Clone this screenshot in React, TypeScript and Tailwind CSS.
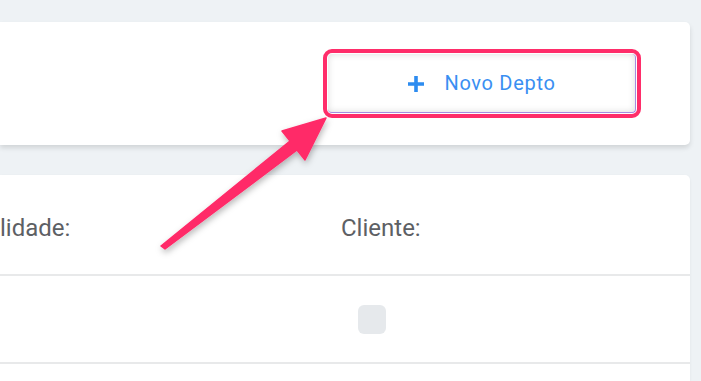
import React from "react";

function Arrow() {
    return (
        <svg
            className="pointer-events-none absolute left-0 top-0"
            width="701"
            height="381"
            viewBox="0 0 701 381"
        >
            <defs>
                <filter id="arrowShadow" x="-20%" y="-20%" width="140%" height="140%">
                    <feDropShadow dx="1" dy="3" stdDeviation="3" floodColor="#000" floodOpacity="0.28" />
                </filter>
            </defs>
            <polygon
                points="161,246 290,141 282,131 326,118 305,160 297,150 165,249"
                fill="#ff2a68"
                stroke="#ff2a68"
                strokeWidth="1.5"
                strokeLinejoin="round"
                filter="url(#arrowShadow)"
            />
        </svg>
    );
}

export default function App() {
    return (
        <div
            className="relative flex h-[381px] w-[701px] flex-col overflow-hidden bg-[#eef2f5] pr-[11px] pt-[22px]"
            style={{ fontFamily: "Roboto, 'Liberation Sans', sans-serif" }}
        >
            {/* Top toolbar card */}
            <div className="flex h-[123px] shrink-0 items-center justify-end rounded-r-[5px] bg-white pr-[49px] shadow-[0_3px_5px_rgba(0,0,0,0.12)]">
                <div className="flex h-[69px] w-[318px] rounded-[9px] border-4 border-[#ff2d6a] p-[1px]">
                    <button
                        type="button"
                        className="flex flex-1 items-center justify-center rounded-[4px] border-b border-r border-b-[#a58be0] border-r-[#a58be0] bg-white shadow-[inset_0_0_7px_rgba(0,0,0,0.14)]"
                    >
                        <svg width="18" height="18" viewBox="0 0 18 18" className="mr-[19px] mt-[1px]">
                            <path d="M9 1v16M1 9h16" stroke="#2d8cf0" strokeWidth="3.6" />
                        </svg>
                        <span className="text-[20px] tracking-[0.7px] text-[#3a8ff2]">Novo Depto</span>
                    </button>
                </div>
            </div>

            {/* Table card */}
            <div className="mt-[30px] flex flex-1 flex-col rounded-tr-[5px] bg-white shadow-[0_1px_3px_rgba(0,0,0,0.06)]">
                <div className="flex h-[99px] items-center text-[24px] text-[#5d6064]">
                    <div className="w-[341px] translate-y-[3px]">lidade:</div>
                    <div className="translate-y-[3px]">Cliente:</div>
                </div>
                <div className="h-[2px] bg-[#e8e9ea]" />
                <div className="flex h-[86px] items-center">
                    <div className="ml-[358px] h-[29px] w-[28px] rounded-[6px] bg-[#e6e9ec]" />
                </div>
                <div className="h-[2px] bg-[#e8e9ea]" />
            </div>

            <Arrow />
        </div>
    );
}
